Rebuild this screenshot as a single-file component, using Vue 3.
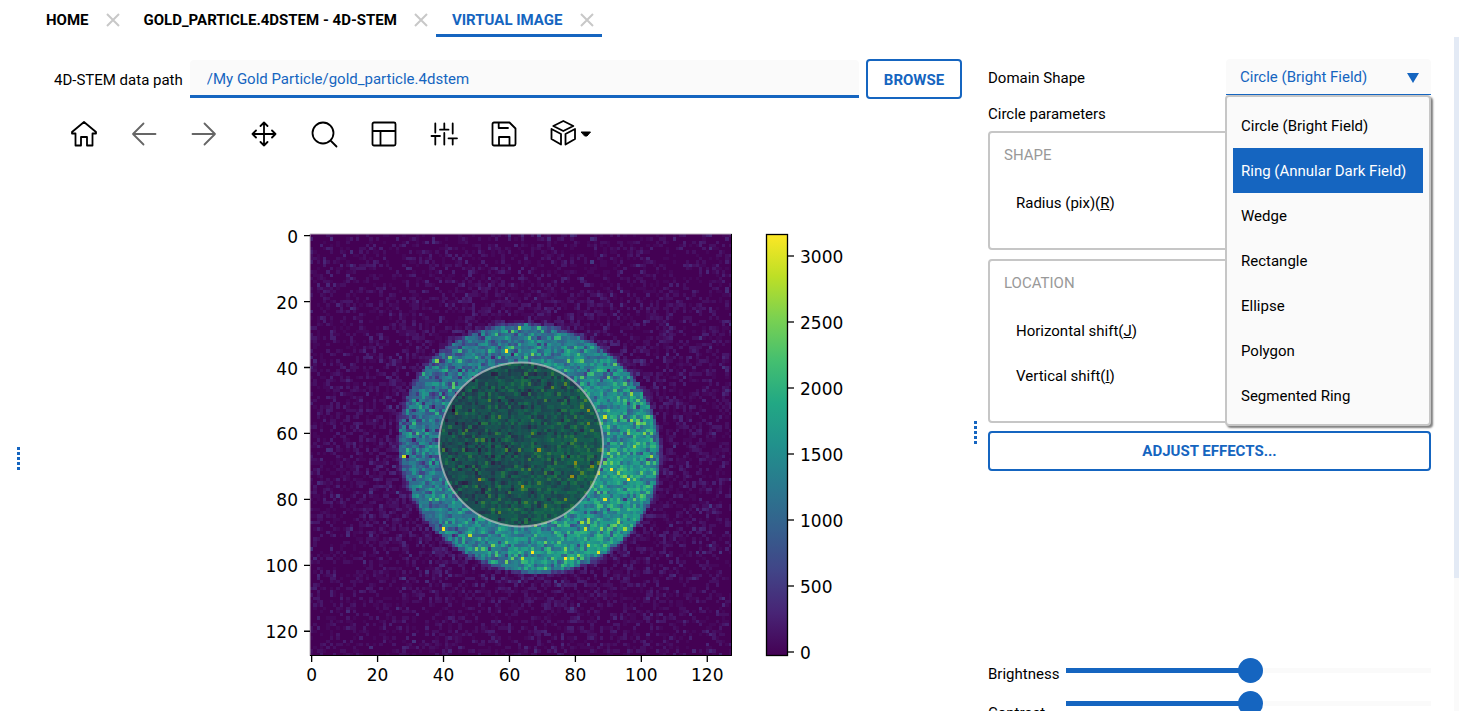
<script setup>
import { ref } from 'vue'

const tabs = [
  { label: 'HOME', active: false },
  { label: 'GOLD_PARTICLE.4DSTEM - 4D-STEM', active: false },
  { label: 'VIRTUAL IMAGE', active: true }
]

const path = ref('/My Gold Particle/gold_particle.4dstem')

const tools = [
  { name: 'Home', d: 'M14 2 2 12v1.5h3.5v12H11v-8.5h6v8.5h5.5v-12H26V12z' },
  { name: 'Back', muted: true, d: 'M3 14h22.5M13.5 3.5 3 14l10.5 10.5' },
  { name: 'Forward', muted: true, d: 'M2.5 14H25M14.5 3.5 25 14 14.5 24.5' },
  { name: 'Pan', d: 'M14 2.5v23M2.5 14h23M10.5 6 14 2.5 17.5 6M10.5 22l3.5 3.5 3.5-3.5M6 10.5 2.5 14 6 17.5M22 10.5l3.5 3.5-3.5 3.5' },
  { name: 'Zoom', d: 'M23.5 13a10.5 10.5 0 1 1-21 0a10.5 10.5 0 1 1 21 0M20.5 20.5l6 6' },
  { name: 'Subplots', d: 'M4 2.5h20a1.5 1.5 0 0 1 1.5 1.5v20a1.5 1.5 0 0 1-1.5 1.5H4A1.5 1.5 0 0 1 2.5 24V4A1.5 1.5 0 0 1 4 2.5zM2.5 11h23M10.5 11v14.5' },
  { name: 'Customize', d: 'M5.3 3.5v9M1.5 16H10M5.3 16v8.5M14.3 3.5v6.2M10 9.7h8.5M14.3 13v11.5M22.7 3.5v10M18.5 18.3H27M22.7 18.3v6.2' },
  { name: 'Save', d: 'M4 2.5h15.5l6 6V24a1.5 1.5 0 0 1-1.5 1.5H4A1.5 1.5 0 0 1 2.5 24V4A1.5 1.5 0 0 1 4 2.5zM8.7 2.5V8H18M9 25.5V17h10.5v8.5' }
]

const shapes = [
  'Circle (Bright Field)',
  'Ring (Annular Dark Field)',
  'Wedge',
  'Rectangle',
  'Ellipse',
  'Polygon',
  'Segmented Ring'
]
const shape = ref(shapes[0])
const hovered = ref(1)

const sliders = ref([
  { id: 'brightness', label: 'Brightness', value: 1 },
  { id: 'contrast', label: 'Contrast', value: 1 }
])

/* Colour map, sampled at equal steps */
const viridis = [
  [68, 1, 84], [72, 36, 117], [65, 68, 135], [53, 95, 141], [42, 120, 142],
  [33, 145, 140], [34, 168, 132], [68, 191, 112], [122, 209, 81], [189, 223, 38], [253, 231, 37]
]
const colour = (t) => {
  const p = Math.min(0.9999, Math.max(0, t)) * 10
  const i = Math.floor(p)
  const f = p - i
  return 'rgb(' + viridis[i].map((c, k) => Math.round(c + (viridis[i + 1][k] - c) * f)).join(',') + ')'
}
const gradient = viridis.map((c, i) => ({ offset: i * 10 + '%', colour: 'rgb(' + c.join(',') + ')' }))

/* Diffraction disc with detector noise, as one path per colour level */
const N = 128
const LEVELS = 48
const MAX = 3170
let seed = 20517
const rand = () => {
  seed = (seed * 1664525 + 1013904223) >>> 0
  return (seed + 0.5) / 4294967296
}
const normal = () => Math.sqrt(-2 * Math.log(rand())) * Math.cos(2 * Math.PI * rand())

const bins = Array.from({ length: LEVELS }, () => '')
for (let y = 0; y < N; y++) {
  for (let x = 0; x < N; x++) {
    const dx = x - 66.0
    const dy = y - 64.5
    const r = Math.hypot(dx, dy)
    const a = Math.atan2(dy, dx)
    const edge = 38.5 + 0.9 * Math.cos(2 * a) + 1.1 * Math.sin(2 * a)
    const inside = 1 / (1 + Math.exp((r - edge) * 3.2))
    const halo = 110 * Math.exp(-Math.max(0, r - edge) / 14)
    const back = Math.max(0, 10 + halo + normal() * 145)
    const n = normal()
    const noise = n * 350 + Math.max(0, n) ** 3 * 28
    const slope = 1400 + dx * 7 + dy * 4
    const value = back * (1 - inside) + inside * (slope + noise)
    const level = Math.max(0, Math.min(LEVELS - 1, Math.floor((value / MAX) * LEVELS)))
    bins[level] += `M${x} ${y}h1v1h-1z`
  }
}
const layers = bins
  .map((d, i) => ({ d, fill: colour(i / (LEVELS - 1)) }))
  .filter((l) => l.d)

const STEP = 422 / 128
const axis = [0, 20, 40, 60, 80, 100, 120].map((v) => ({ v, p: (v + 0.5) * STEP }))
const scale = [0, 500, 1000, 1500, 2000, 2500, 3000].map((v) => ({ v, y: 488 - v * 0.132 }))
</script>

<template>
  <div class="app">
    <nav class="tabs">
      <div v-for="t in tabs" :key="t.label" class="tab" :class="{ active: t.active }">
        <button type="button" class="tab-name">{{ t.label }}</button>
        <button type="button" class="tab-close" :aria-label="'Close ' + t.label">
          <svg viewBox="0 0 14 14"><path d="M1 1l12 12M13 1 1 13" /></svg>
        </button>
      </div>
    </nav>

    <main class="body">
      <div class="splitter first"><i v-for="n in 5" :key="n"></i></div>

      <section class="viewer">
        <div class="path-row">
          <label for="path">4D-STEM data path</label>
          <input id="path" v-model="path" type="text" />
          <button type="button" class="outlined browse">BROWSE</button>
        </div>

        <div class="toolbar">
          <button v-for="t in tools" :key="t.name" type="button" class="tool" :class="{ muted: t.muted }" :aria-label="t.name">
            <svg viewBox="0 0 28 28"><path :d="t.d" /></svg>
          </button>
          <button type="button" class="tool wide" aria-label="View">
            <svg viewBox="0 0 44 28">
              <path d="M14.3 1 24.3 6l-10 5-10-5zM2.5 9l9.5 5v10.5L2.5 19zM26 9l-9.5 5v10.5L26 19z" />
              <path class="solid" d="M32.5 12h9L38 16h-2z" />
            </svg>
          </button>
        </div>

        <svg class="plot" viewBox="0 0 908 547" role="img" aria-label="Virtual image">
          <defs>
            <linearGradient id="cmap" x1="0" y1="1" x2="0" y2="0">
              <stop v-for="g in gradient" :key="g.offset" :offset="g.offset" :stop-color="g.colour" />
            </linearGradient>
          </defs>
          <g transform="translate(256 70)">
            <rect width="422" height="422" fill="#440154" />
            <g :transform="`scale(${STEP})`" shape-rendering="crispEdges">
              <path v-for="l in layers" :key="l.fill" :d="l.d" :fill="l.fill" />
            </g>
            <circle cx="211" cy="210.5" r="82" class="mask" />
            <path d="M0 422V0H422" class="frame light" />
            <path d="M0 421.5H421.5V0" class="frame" />
            <g v-for="t in axis" :key="t.v">
              <path :d="`M${t.p} 422v6M0 ${t.p}h-6`" class="tick" />
              <text :x="t.p" y="447" text-anchor="middle">{{ t.v }}</text>
              <text x="-12" :y="t.p + 7" text-anchor="end">{{ t.v }}</text>
            </g>
          </g>
          <rect x="712.5" y="70.5" width="21" height="421" fill="url(#cmap)" stroke="#000" stroke-width="1.3" />
          <g v-for="s in scale" :key="s.v">
            <path :d="`M734 ${s.y}h6`" class="tick" />
            <text x="746" :y="s.y + 7">{{ s.v }}</text>
          </g>
        </svg>
      </section>

      <div class="splitter second"><i v-for="n in 5" :key="n"></i></div>

      <aside class="panel">
        <div class="domain">
          <label for="domain">Domain Shape</label>
          <div class="picker">
            <select id="domain" v-model="shape">
              <option v-for="s in shapes" :key="s">{{ s }}</option>
            </select>
            <svg class="arrow" viewBox="0 0 12 10"><path d="M0 0h12L6 10z" /></svg>
            <ul class="menu" role="listbox" aria-label="Domain Shape">
              <li
                v-for="(s, i) in shapes"
                :key="s"
                role="option"
                :aria-selected="i === hovered"
                :class="{ on: i === hovered }"
                @mouseenter="hovered = i"
                @click="shape = s"
              >{{ s }}</li>
            </ul>
          </div>
        </div>

        <h2>Circle parameters</h2>

        <section class="group">
          <h3>SHAPE</h3>
          <p>Radius (pix)(<u>R</u>)</p>
        </section>
        <section class="group">
          <h3>LOCATION</h3>
          <p>Horizontal shift(<u>J</u>)</p>
          <p>Vertical shift(<u>I</u>)</p>
        </section>

        <button type="button" class="outlined adjust">ADJUST EFFECTS...</button>

        <div class="levels">
          <div class="level-names">
            <label v-for="s in sliders" :key="s.id" :for="s.id">{{ s.label }}</label>
          </div>
          <div class="level-bars">
            <input
              v-for="s in sliders"
              :id="s.id"
              :key="s.id"
              v-model.number="s.value"
              type="range"
              min="-100"
              max="100"
              :style="{ '--fill': (s.value + 100) / 2 + '%' }"
            />
          </div>
        </div>
      </aside>

      <div class="scroll"><div class="thumb"></div></div>
    </main>
  </div>
</template>

<style>
body {
  background: #fff;
  overflow: hidden;
}
</style>

<style scoped>
.app {
  --blue: #1565c0;
  --grey: #c6c6c6;
  --field: #fafafa;
  display: flex;
  flex-direction: column;
  height: 100vh;
  overflow: hidden;
  color: #000;
  font: 15px/20px Roboto, sans-serif;
}
.app * {
  box-sizing: border-box;
}
button,
input,
select {
  margin: 0;
  padding: 0;
  border: 0;
  background: none;
  color: inherit;
  font: inherit;
}
h2,
h3,
p,
ul {
  margin: 0;
  padding: 0;
  font: inherit;
  list-style: none;
}

.tabs {
  display: flex;
  flex: none;
  height: 37px;
  padding-left: 30px;
}
.tab {
  display: flex;
  align-items: center;
  gap: 17px;
  padding: 6px 8px 0 16px;
  border-bottom: 3px solid transparent;
}
.tab.active {
  border-bottom-color: var(--blue);
  color: var(--blue);
}
.tab-name {
  padding-bottom: 1px;
  font-weight: 700;
}
.tab-close,
.tab-close svg {
  display: block;
  width: 14px;
  height: 14px;
}
.tab-close path {
  fill: none;
  stroke: #c8c8c8;
  stroke-width: 2;
}

.body {
  display: grid;
  grid-template-columns: 37px minmax(0, 925fr) 26px minmax(0, 443fr) 38px;
  flex: 1;
  min-height: 0;
}
.splitter {
  display: flex;
  flex-direction: column;
  align-items: center;
  gap: 2px;
}
.splitter.first {
  padding-top: 410px;
}
.splitter.second {
  padding-top: 384px;
}
.splitter i {
  width: 3px;
  height: 3px;
  background: var(--blue);
}

.viewer {
  padding: 22px 0 0 17px;
}
.path-row {
  display: flex;
  align-items: center;
  gap: 7px;
}
.path-row label,
.domain label {
  padding-top: 2px;
}
.path-row input {
  flex: 1;
  min-width: 0;
  height: 38px;
  padding: 2px 17px 0;
  border-bottom: 3px solid var(--blue);
  border-radius: 4px 4px 0 0;
  background: var(--field);
  color: var(--blue);
}
.outlined {
  height: 40px;
  border: 2px solid var(--blue);
  border-radius: 4px;
  color: var(--blue);
  font-weight: 700;
}
.browse {
  width: 96px;
  padding-top: 1px;
}

.toolbar {
  display: flex;
  padding-top: 5px;
}
.tool {
  display: flex;
  align-items: center;
  justify-content: center;
  width: 60px;
  height: 60px;
}
.tool svg {
  width: 28px;
  height: 28px;
  fill: none;
  stroke: #000;
  stroke-width: 1.8;
  stroke-linejoin: round;
  stroke-linecap: round;
}
.tool.muted svg {
  stroke: #666;
}
.tool.wide {
  width: 74px;
}
.tool.wide svg {
  width: 44px;
}
.tool .solid {
  fill: #000;
  stroke-width: 1;
}

.plot {
  display: block;
  width: 100%;
}
.plot text {
  font: 17px "DejaVu Sans", sans-serif;
}
.mask {
  fill: rgba(8, 20, 0, 0.42);
  stroke: rgba(205, 205, 205, 0.65);
  stroke-width: 2;
}
.frame {
  fill: none;
  stroke: #000;
  stroke-width: 1;
}
.frame.light {
  stroke: #b9b0bb;
}
.tick {
  stroke: #000;
  stroke-width: 1.3;
}

.panel {
  display: flex;
  flex-direction: column;
  min-width: 0;
  padding-top: 22px;
}
.domain {
  display: flex;
  justify-content: space-between;
  align-items: center;
}
.picker {
  position: relative;
  width: 205px;
}
.picker select {
  display: block;
  width: 100%;
  height: 36px;
  padding-left: 14px;
  border-bottom: 1px solid var(--blue);
  border-radius: 4px 4px 0 0;
  background: var(--field);
  color: var(--blue);
  appearance: none;
}
.arrow {
  position: absolute;
  top: 14px;
  right: 12px;
  width: 12px;
  height: 10px;
  fill: var(--blue);
  pointer-events: none;
}
.menu {
  position: absolute;
  top: 100%;
  left: -1px;
  right: 0;
  z-index: 2;
  padding: 6px;
  border: 2px solid var(--grey);
  border-radius: 4px;
  background: var(--field);
  box-shadow: 2px 2px 2px rgba(0, 0, 0, 0.5);
}
.menu li {
  padding: 1px 8px 0;
  line-height: 44px;
  white-space: nowrap;
}
.menu li.on {
  background: var(--blue);
  color: #fff;
}
.panel h2 {
  padding: 9px 0 7px;
}
.group {
  padding: 12px 14px 22px;
  border: 2px solid var(--grey);
  border-radius: 4px;
}
.group + .group {
  margin-top: 9px;
}
.group h3 {
  margin-bottom: 16px;
  color: #999;
}
.group p {
  padding-left: 12px;
  line-height: 45px;
}
.adjust {
  flex: none;
  width: 100%;
  margin-top: 8px;
}
.levels {
  display: flex;
  gap: 7px;
  padding-top: 183px;
}
.level-names {
  padding-top: 1px;
}
.level-names label {
  display: block;
  line-height: 39px;
}
.level-bars {
  flex: 1;
}
.level-bars input {
  display: block;
  width: 100%;
  height: 33px;
  appearance: none;
}
.level-bars input::-webkit-slider-runnable-track {
  height: 5px;
  background: linear-gradient(to right, var(--blue) var(--fill), var(--field) var(--fill));
}
.level-bars input::-webkit-slider-thumb {
  width: 25px;
  height: 25px;
  margin-top: -10px;
  border-radius: 50%;
  background: var(--blue);
  appearance: none;
}

.scroll {
  width: 5px;
  margin-left: 23px;
  background: var(--field);
}
.thumb {
  height: 541px;
  background: #e3eaf5;
}
</style>
